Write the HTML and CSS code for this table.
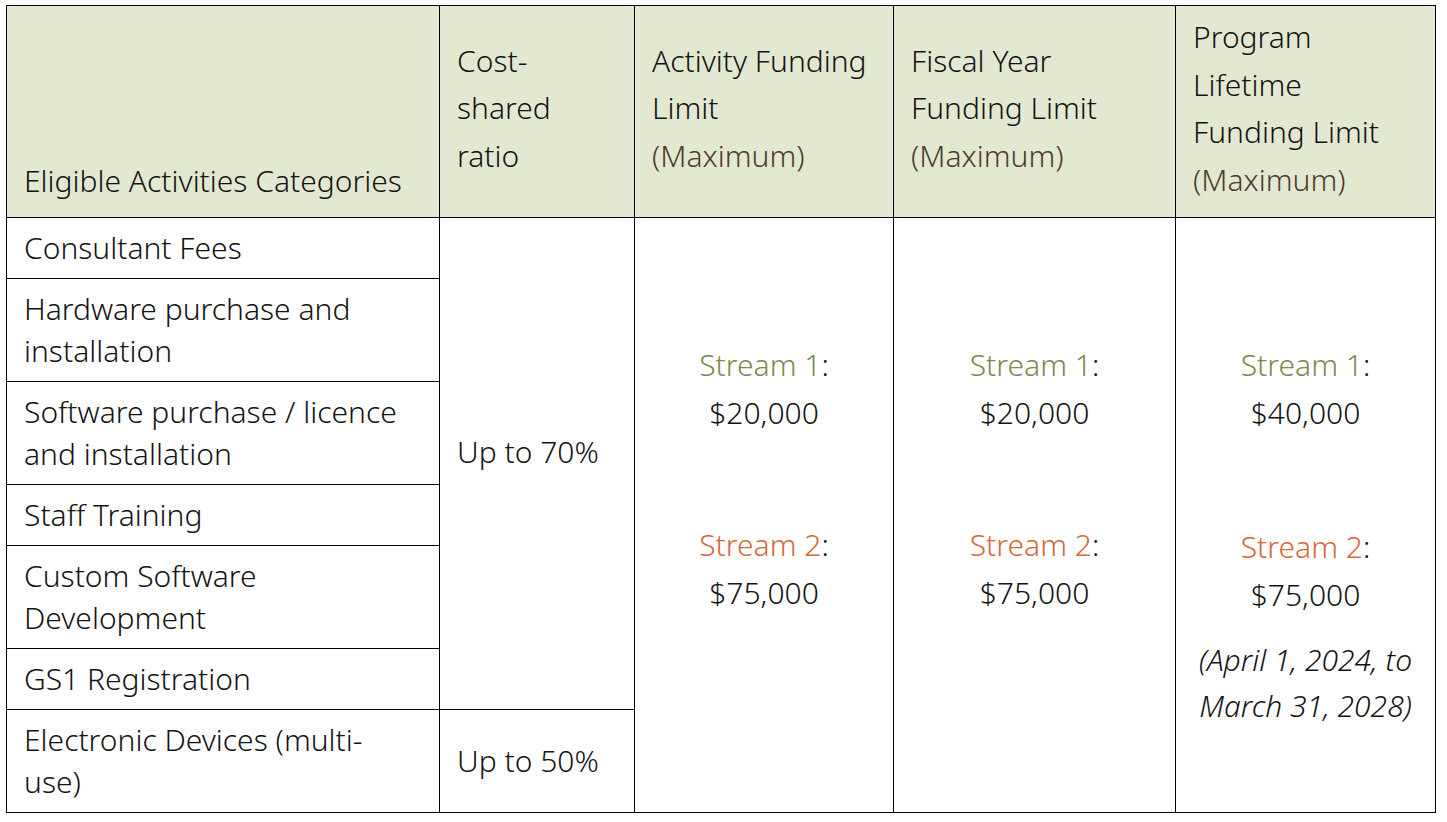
FILE: index.html
```html
<!DOCTYPE html>
<html lang="en">
<head>
<meta charset="utf-8">
<title>Eligible Activities</title>
<link rel="stylesheet" href="styles.css">
</head>
<body>
<table class="grid">
  <colgroup>
    <col class="c1"><col class="c2"><col class="c3"><col class="c4"><col class="c5">
  </colgroup>
  <thead>
    <tr>
      <th class="hd hd-bottom">Eligible Activities Categories</th>
      <th class="hd">Cost-<br>shared<br>ratio</th>
      <th class="hd">Activity Funding<br>Limit<br><span class="max">(Maximum)</span></th>
      <th class="hd">Fiscal Year<br>Funding Limit<br><span class="max">(Maximum)</span></th>
      <th class="hd">Program<br>Lifetime<br>Funding Limit<br><span class="max">(Maximum)</span></th>
    </tr>
  </thead>
  <tbody>
    <tr>
      <td class="cat">Consultant Fees</td>
      <td class="ratio ratio-70" rowspan="6">Up to 70%</td>
      <td class="fund" rowspan="7">
        <p class="line"><span class="s1">Stream 1</span>:</p>
        <p class="line amt">$20,000</p>
        <p class="line gap"><span class="s2">Stream 2</span>:</p>
        <p class="line amt">$75,000</p>
      </td>
      <td class="fund" rowspan="7">
        <p class="line"><span class="s1">Stream 1</span>:</p>
        <p class="line amt">$20,000</p>
        <p class="line gap"><span class="s2">Stream 2</span>:</p>
        <p class="line amt">$75,000</p>
      </td>
      <td class="fund" rowspan="7">
        <p class="line"><span class="s1">Stream 1</span>:</p>
        <p class="line amt">$40,000</p>
        <p class="line gap gap-wide"><span class="s2">Stream 2</span>:</p>
        <p class="line amt">$75,000</p>
        <p class="note">(April 1, 2024, to<br>March 31, 2028)</p>
      </td>
    </tr>
    <tr><td class="cat">Hardware purchase and<br>installation</td></tr>
    <tr><td class="cat">Software purchase / licence<br>and installation</td></tr>
    <tr><td class="cat">Staff Training</td></tr>
    <tr><td class="cat">Custom Software<br>Development</td></tr>
    <tr><td class="cat">GS1 Registration</td></tr>
    <tr>
      <td class="cat">Electronic Devices (multi-<br>use)</td>
      <td class="ratio">Up to 50%</td>
    </tr>
  </tbody>
</table>
</body>
</html>
```

FILE: styles.css
```css
html, body {
  margin: 0;
  padding: 0;
  background: #ffffff;
}

body {
  padding: 5px 0 0 6px;
  font-family: "Noto Sans", "Open Sans", sans-serif;
  font-size: 30px;
  font-weight: 350;
  color: #141414;
}

.grid {
  border-collapse: collapse;
  table-layout: fixed;
  width: 1429px;
}

.c1 { width: 433px; }
.c2 { width: 195px; }
.c3 { width: 259px; }
.c4 { width: 282px; }
.c5 { width: 260px; }

.grid th,
.grid td {
  border: 1px solid #000;
  padding: 0 10px 0 17px;
}

.grid .hd {
  background: #e3e9d0;
  font-weight: 350;
  text-align: left;
  vertical-align: middle;
  line-height: 47.5px;
  height: 190px;
  padding-top: 7px;
  padding-bottom: 14px;
}

.grid .hd-bottom {
  vertical-align: bottom;
  padding-bottom: 13px;
}

.max {
  font-weight: 300;
  color: #4d3a2e;
}

.grid .cat {
  line-height: 42px;
  height: 42px;
  padding-top: 9px;
  padding-bottom: 9px;
  vertical-align: middle;
}

.grid .ratio {
  vertical-align: middle;
  font-weight: 300;
  line-height: 42px;
}

.grid .ratio-70 {
  padding-bottom: 24px;
}

.grid .fund {
  vertical-align: top;
  text-align: center;
  padding: 123px 8px 0 8px;
  font-weight: 300;
}

.line {
  margin: 0;
  line-height: 48px;
}

.gap {
  margin-top: 84px;
}

.gap-wide {
  margin-top: 86px;
}

.s1 { color: #7b8a4b; }
.s2 { color: #d4693a; }

.note {
  margin: 18px 0 0 0;
  font-style: italic;
  font-weight: 350;
  line-height: 46px;
}
```
